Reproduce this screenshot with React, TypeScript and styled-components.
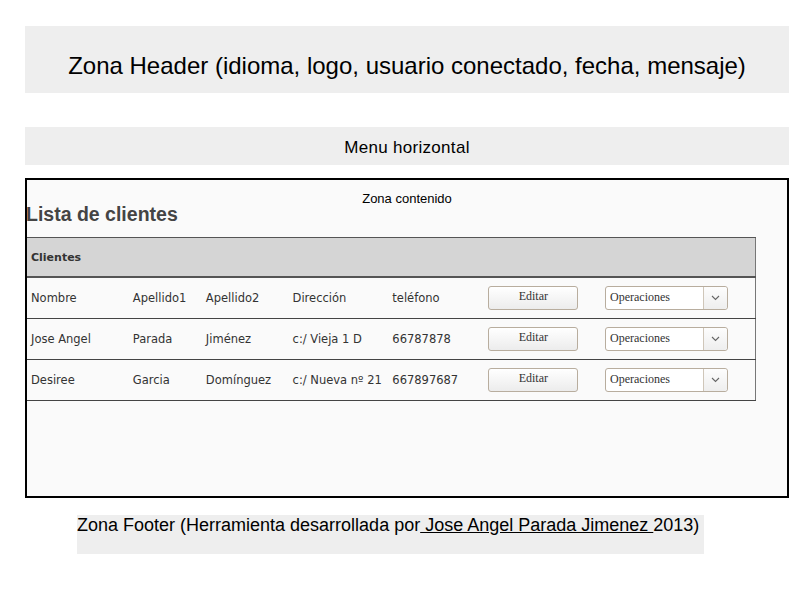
import { type FC } from 'react'
import styled, { createGlobalStyle } from 'styled-components'

interface ICliente {
  nombre: string
  apellido1: string
  apellido2: string
  direccion: string
  telefono: string
}

const clientes: ICliente[] = [
  { nombre: 'Nombre', apellido1: 'Apellido1', apellido2: 'Apellido2', direccion: 'Dirección', telefono: 'teléfono' },
  { nombre: 'Jose Angel', apellido1: 'Parada', apellido2: 'Jiménez', direccion: 'c:/ Vieja 1 D', telefono: '66787878' },
  { nombre: 'Desiree', apellido1: 'Garcia', apellido2: 'Domínguez', direccion: 'c:/ Nueva nº 21', telefono: '667897687' },
]

const GlobalStyle = createGlobalStyle`
  html, body {
    margin: 0;
    padding: 0;
    background: #fff;
    font-family: 'Liberation Sans', Arial, sans-serif;
    color: #000;
  }
`

const Page = styled.div`
  width: 800px;
  height: 600px;
  padding: 26px 11px 0 25px;
  box-sizing: border-box;
  display: flex;
  flex-direction: column;
`

const Header = styled.header`
  height: 67px;
  padding-top: 12px;
  box-sizing: border-box;
  background: #eeeeee;
  display: flex;
  align-items: center;
  justify-content: center;
  font-size: 24px;
`

const Menu = styled.nav`
  margin-top: 34px;
  height: 38px;
  padding-top: 3px;
  box-sizing: border-box;
  background: #eeeeee;
  display: flex;
  align-items: center;
  justify-content: center;
  font-size: 17px;
  letter-spacing: 0.3px;
`

const Content = styled.main`
  margin-top: 13px;
  height: 320px;
  border: 2px solid #000;
  background: #fafafa;
  box-sizing: border-box;
  display: flex;
  flex-direction: column;
`

const ZoneLabel = styled.div`
  text-align: center;
  font-size: 13px;
  margin-top: 11px;
  line-height: 15px;
`

const Title = styled.h2`
  margin: -3px 0 12px -1px;
  font-size: 19.5px;
  line-height: 22px;
  font-weight: bold;
  color: #444;
`

const Table = styled.table`
  width: 729px;
  border-collapse: collapse;
  font-family: 'Comic Sans MS', 'DejaVu Sans', sans-serif;
  font-size: 11.5px;
  color: #333;
  border-right: 1px solid #777;
`

const HeadCell = styled.th`
  height: 38px;
  background: #d5d5d5;
  text-align: left;
  padding: 0 0 0 4px;
  font-weight: bold;
  font-size: 11px;
  color: #333;
  border-top: 1px solid #555;
  border-bottom: 2px solid #555;
`

const Row = styled.tr`
  height: 41px;
  & > td {
    border-bottom: 1px solid #444;
    border-top: 1px solid #bbb;
  }
`

const Cell = styled.td<{ $w: number }>`
  width: ${p => p.$w}px;
  padding: 0 0 0 4px;
  white-space: nowrap;
  vertical-align: middle;
`

const EditButton = styled.button`
  width: 90px;
  height: 24px;
  border: 1px solid #b8ad9e;
  border-radius: 3px;
  background: linear-gradient(#ffffff, #ececec);
  font-family: 'Liberation Serif', 'Times New Roman', serif;
  font-size: 12px;
  color: #333;
  padding: 0 0 3px;
`

const Select = styled.div`
  width: 123px;
  height: 24px;
  border: 1px solid #b8ad9e;
  border-radius: 3px;
  background: #fff;
  box-sizing: border-box;
  display: flex;
  font-family: 'Liberation Serif', 'Times New Roman', serif;
  font-size: 12px;
  color: #333;
`

const SelectText = styled.span`
  flex: 1;
  padding: 3px 0 0 4px;
  line-height: 14px;
`

const SelectArrow = styled.span`
  width: 23px;
  border-left: 1px solid #cfc6b9;
  background: linear-gradient(#fdfdfd, #eeeeee);
  display: flex;
  align-items: center;
  justify-content: center;
  border-radius: 0 3px 3px 0;
`

const Footer = styled.footer`
  margin: 17px 0 0 52px;
  width: 627px;
  height: 39px;
  background: #eeeeee;
  font-size: 18px;
  line-height: 20px;
  box-sizing: border-box;
`

const Link = styled.a`
  color: #000;
  text-decoration: underline;
`

const widths = [105, 72, 86, 97, 97, 117, 155]

const App: FC = () => (
  <>
    <GlobalStyle />
    <Page>
      <Header>Zona Header (idioma, logo, usuario conectado, fecha, mensaje)</Header>
      <Menu>Menu horizontal</Menu>
      <Content>
        <ZoneLabel>Zona contenido</ZoneLabel>
        <Title>Lista de clientes</Title>
        <Table>
          <thead>
            <tr>
              <HeadCell colSpan={7}>Clientes</HeadCell>
            </tr>
          </thead>
          <tbody>
            {clientes.map((c, i) => (
              <Row key={i}>
                <Cell $w={widths[0]}>{c.nombre}</Cell>
                <Cell $w={widths[1]}>{c.apellido1}</Cell>
                <Cell $w={widths[2]}>{c.apellido2}</Cell>
                <Cell $w={widths[3]}>{c.direccion}</Cell>
                <Cell $w={widths[4]}>{c.telefono}</Cell>
                <Cell $w={widths[5]}>
                  <EditButton>Editar</EditButton>
                </Cell>
                <Cell $w={widths[6]}>
                  <Select>
                    <SelectText>Operaciones</SelectText>
                    <SelectArrow>
                      <svg width="9" height="6" viewBox="0 0 9 6">
                        <path d="M1 1l3.5 3.5L8 1" fill="none" stroke="#666" strokeWidth="1.1" />
                      </svg>
                    </SelectArrow>
                  </Select>
                </Cell>
              </Row>
            ))}
          </tbody>
        </Table>
      </Content>
      <Footer>
        Zona Footer (Herramienta desarrollada por<Link href="#"> Jose Angel Parada Jimenez </Link>2013)
      </Footer>
    </Page>
  </>
)

export default App
